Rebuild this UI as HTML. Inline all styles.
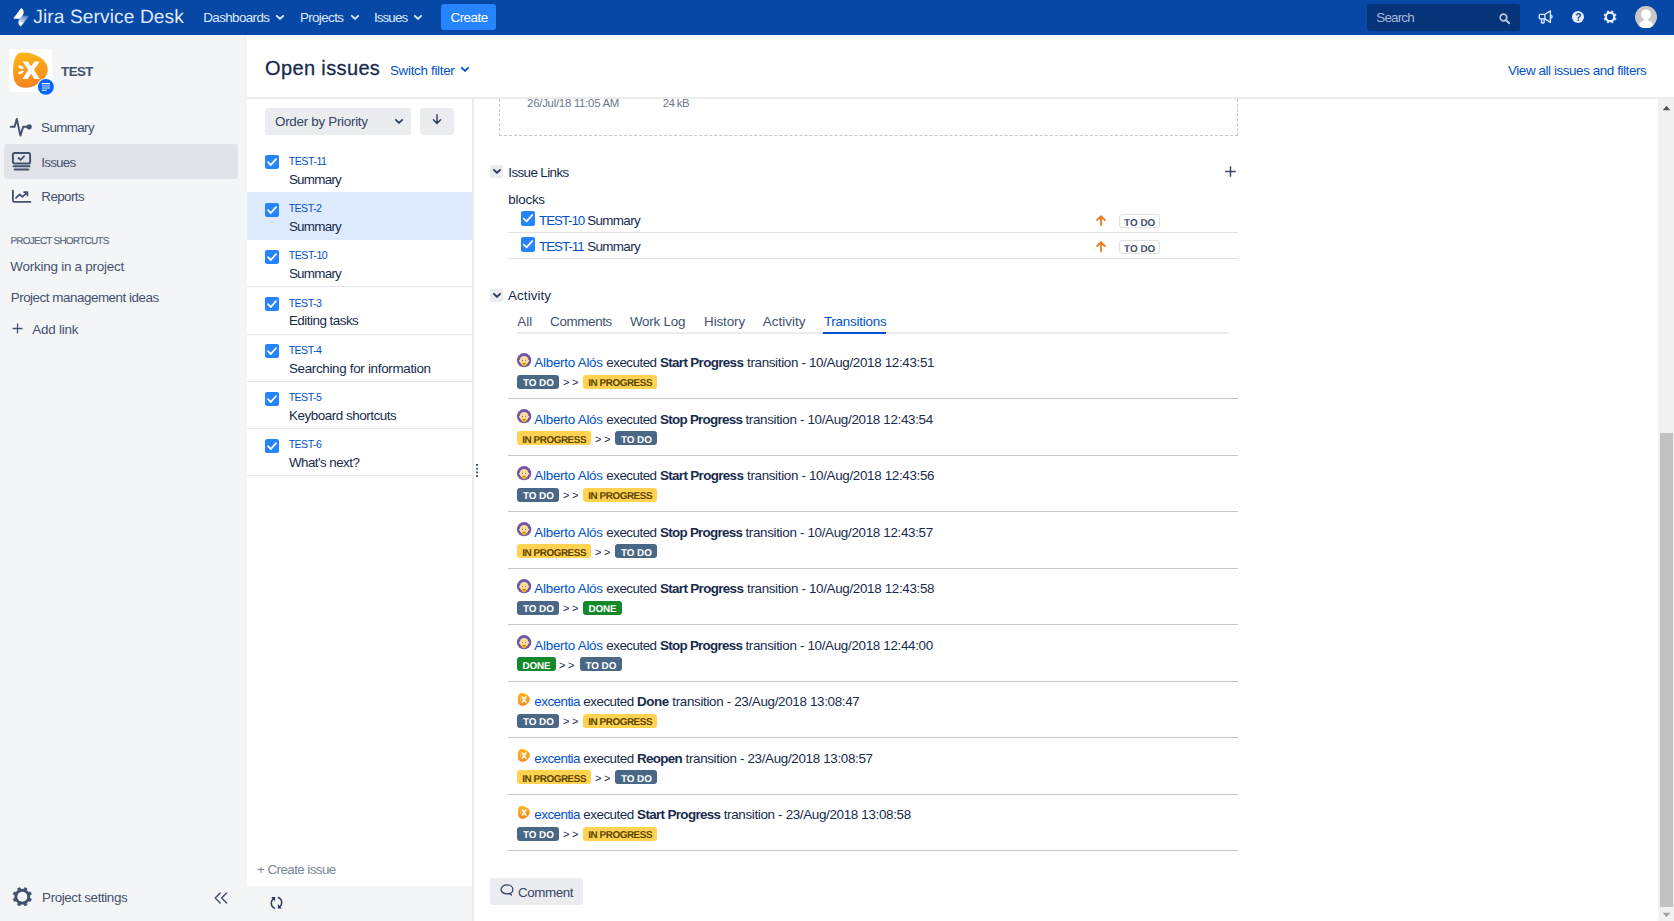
<!DOCTYPE html>
<html lang="en">
<head>
<meta charset="utf-8">
<title>Open issues - TEST - Jira Service Desk</title>
<style>

*{box-sizing:border-box;margin:0;padding:0}
html,body{width:1674px;height:921px;overflow:hidden;background:#fff}
body{font-family:"Liberation Sans",sans-serif;font-size:13px;color:#172B4D;position:relative}
a{text-decoration:none}
.t{position:absolute;white-space:pre;display:block}
.b{position:absolute;display:block}
svg{position:absolute;display:block;overflow:visible}
#hdr{position:absolute;left:0;top:0;width:1674px;height:35px;background:#0747A6}
#side{position:absolute;left:0;top:35px;width:247px;height:886px;background:#F4F5F7}
.cb{position:absolute;width:14px;height:14px;background:#2684FF;border-radius:2px}
.cb svg{left:0;top:0}
.hr{position:absolute;height:1px;background:#DFE1E6}
.hr2{position:absolute;height:1px;background:#C1C7D0}
.hr3{position:absolute;height:1px;background:#E4E6EB}
.btn{position:absolute;background:#EBECF0;border-radius:3px}
.lz{position:absolute;height:14px;border-radius:3px}
.lz-todo{background:#4A6785}
.lz-prog{background:#FFD351}
.lz-done{background:#14892C}
.lzs{position:absolute;height:14px;border-radius:3px;border:1px solid #DFE1E6;background:#fff}

</style>
</head>
<body>

<div id="hdr">
<svg style="left:0;top:0" width="40" height="35" viewBox="0 0 40 35"><defs><linearGradient id="lg1" x1="0.7" y1="0" x2="0.3" y2="1"><stop offset="0" stop-color="#DEEBFF" stop-opacity="0.35"/><stop offset="0.85" stop-color="#fff" stop-opacity="1"/></linearGradient></defs>
<path d="M21.5 8.2 C22.4 8.2 23.9 10.5 23.7 12.7 C23.5 14.9 21.1 17.6 19.3 18.7 L14.5 18.7 C13.8 18.7 13.5 18 14 17.4 L20.8 8.6 C21 8.3 21.2 8.2 21.5 8.2 Z" fill="#fff"/>
<path d="M20.6 26.3 C19.7 26.3 18.2 24 18.4 21.8 C18.6 19.6 21 16.9 22.8 15.8 L27.7 15.8 C28.4 15.8 28.7 16.5 28.2 17.1 L21.3 25.9 C21.1 26.2 20.9 26.3 20.6 26.3 Z" fill="url(#lg1)"/></svg>
<span class="t" style="left:33.3px;top:7px;font-size:19.2px;line-height:21px;letter-spacing:0.08px;color:#DEEBFF;text-rendering:geometricPrecision;">Jira Service Desk</span>

<span class="t" style="left:203.3px;top:10px;font-size:13.4px;line-height:15px;letter-spacing:-0.62px;color:#DEEBFF;">Dashboards</span>
<svg style="left:276px;top:15px" width="8" height="5" viewBox="0 0 8 5"><path d="M0.8 0.8 L4 3.9 L7.2 0.8" fill="none" stroke="#DEEBFF" stroke-width="1.85" stroke-linecap="round" stroke-linejoin="round"/></svg>
<span class="t" style="left:299.9px;top:10px;font-size:13.4px;line-height:15px;letter-spacing:-0.62px;color:#DEEBFF;">Projects</span>
<svg style="left:350.5px;top:15px" width="8" height="5" viewBox="0 0 8 5"><path d="M0.8 0.8 L4 3.9 L7.2 0.8" fill="none" stroke="#DEEBFF" stroke-width="1.85" stroke-linecap="round" stroke-linejoin="round"/></svg>
<span class="t" style="left:373.9px;top:10px;font-size:13.4px;line-height:15px;letter-spacing:-0.88px;color:#DEEBFF;">Issues</span>
<svg style="left:414px;top:15px" width="8" height="5" viewBox="0 0 8 5"><path d="M0.8 0.8 L4 3.9 L7.2 0.8" fill="none" stroke="#DEEBFF" stroke-width="1.85" stroke-linecap="round" stroke-linejoin="round"/></svg>
<span class="b" style="left:441px;top:4px;width:55px;height:26px;background:#2684FF;border-radius:3px"></span>
<span class="t" style="left:450.5px;top:10px;font-size:13.4px;line-height:15px;letter-spacing:-0.52px;color:#fff;">Create</span>

<span class="b" style="left:1367px;top:4px;width:153px;height:27px;background:#073379;border-radius:3px"></span>
<span class="t" style="left:1376.3px;top:10px;font-size:13.4px;line-height:15px;letter-spacing:-0.82px;color:#A5B9DB;">Search</span>

<svg style="left:1498.5px;top:12.8px" width="12" height="12" viewBox="0 0 12 12"><circle cx="4.5" cy="4.5" r="3.3" fill="none" stroke="#B7C4DE" stroke-width="1.7"/><path d="M7.2 7.2 L10.2 10.2" stroke="#B7C4DE" stroke-width="2" stroke-linecap="round"/></svg>
<svg style="left:1535px;top:8px" width="20" height="18" viewBox="1535 8 20 18"><g fill="none" stroke="#DEEBFF" stroke-width="1.35" stroke-linejoin="round" stroke-linecap="round"><rect x="1539.3" y="14.3" width="5.6" height="4.6" rx="0.9"/><path d="M1544.9 14.3 L1550.4 10.9 V22.4 L1544.9 18.9"/><path d="M1541.5 18.9 V22.2 C1541.5 23.3 1544.1 23.3 1544.1 22.2 V18.9"/><path d="M1550.6 15.3 C1552.6 15.3 1552.6 18 1550.6 18"/></g></svg>
<span class="b" style="left:1571.5px;top:10.7px;width:12.6px;height:12.6px;border-radius:50%;background:#E4EEFF"></span>
<span class="t" style="left:1575.3px;top:12px;font-size:10px;line-height:11px;letter-spacing:-1.11px;color:#0747A6;font-weight:700;">?</span>

<svg style="left:1602px;top:9px" width="16" height="16" viewBox="1602 9 16 16"><circle cx="1610.05" cy="16.95" r="5.0" fill="#E4EEFF"/><path d="M1610.98 12.04 L1611.62 10.85 L1613.25 11.52 L1612.87 12.82 L1614.18 14.13 L1615.48 13.75 L1616.15 15.38 L1614.96 16.02 L1614.96 17.88 L1616.15 18.52 L1615.48 20.15 L1614.18 19.77 L1612.87 21.08 L1613.25 22.38 L1611.62 23.05 L1610.98 21.86 L1609.12 21.86 L1608.48 23.05 L1606.85 22.38 L1607.23 21.08 L1605.92 19.77 L1604.62 20.15 L1603.95 18.52 L1605.14 17.88 L1605.14 16.02 L1603.95 15.38 L1604.62 13.75 L1605.92 14.13 L1607.23 12.82 L1606.85 11.52 L1608.48 10.85 L1609.12 12.04 Z" fill="#E4EEFF" stroke="#E4EEFF" stroke-width="0.5" stroke-linejoin="round"/><circle cx="1610.05" cy="16.95" r="3.1" fill="#0747A6"/></svg>
<svg style="left:1635px;top:6px" width="22" height="22" viewBox="0 0 22 22"><defs><clipPath id="avc"><circle cx="11" cy="11.1" r="11"/></clipPath></defs><circle cx="11" cy="11.1" r="11" fill="#C8C8C8"/><g clip-path="url(#avc)" fill="#fff"><circle cx="11" cy="8.4" r="5"/><path d="M2.8 24 C2.8 18 5.4 15.6 8.6 14.4 L9 12 H13 L13.4 14.4 C16.6 15.6 19.2 18 19.2 24 Z"/></g></svg>
</div>

<div id="side"></div>
<span class="b" style="left:9px;top:49px;width:43px;height:43px;background:#fff;border-radius:3px"></span>
<svg style="left:8px;top:48px" width="48" height="48" viewBox="8 48 48 48"><defs><linearGradient id="og" x1="0.4" y1="0" x2="0.5" y2="1"><stop offset="0" stop-color="#FDB515"/><stop offset="1" stop-color="#F5821F"/></linearGradient></defs>
<path d="M22 52.6 C30 52.2 40 55.5 45 62 C48.6 66.6 48.6 72 45.5 76.5 C41 83 33 88 25 87.8 C19 87.6 14.6 84 13.7 78 C12.9 72 13.1 64 14.6 59 C15.9 54.8 18.5 52.8 22 52.6 Z" fill="url(#og)"/>
<path d="M22.6 61.4 H27.8 L31.1 66.4 L34.4 61.4 H39.6 L34 70.1 L39.9 79 H34.6 L31.1 73.8 L27.6 79 H22.3 L28.2 70.1 Z" fill="#fff"/>
<path d="M18 65.8 C20.6 64.8 23.2 66.2 23.8 68.6 C21.2 69.6 18.6 68.2 18 65.8 Z M18 73.8 C18.6 71.4 21.2 70 23.8 71 C23.2 73.4 20.6 74.8 18 73.8 Z" fill="#fff"/>
<circle cx="45.9" cy="86.9" r="8.9" fill="#F4F5F7"/><circle cx="45.9" cy="86.9" r="7.9" fill="#0065FF"/>
<path d="M41.9 83.6 H50.1 M41.9 90.3 H46.8" stroke="#fff" stroke-width="1.1"/><path d="M41.9 85.8 H50.1 M41.9 88 H50.1" stroke="#9CC3FF" stroke-width="1.3"/></svg>
<span class="t" style="left:61.1px;top:64px;font-size:13.4px;line-height:15px;letter-spacing:-0.61px;color:#42526E;font-weight:700;">TEST</span>

<svg style="left:10px;top:117px" width="23" height="21" viewBox="0 0 23 21"><path d="M0.8 9.8 H4.6 L6.8 2 L10.4 18.6 L13.2 9.8 H17.4" fill="none" stroke="#42526E" stroke-width="1.95" stroke-linejoin="round" stroke-linecap="round"/><circle cx="19.2" cy="9.8" r="2.6" fill="#42526E"/></svg>
<span class="t" style="left:41.1px;top:120px;font-size:13.4px;line-height:15px;letter-spacing:-0.63px;color:#42526E;">Summary</span>

<span class="b" style="left:4px;top:144px;width:234px;height:35px;background:#E1E3E9;border-radius:3px"></span>
<svg style="left:12px;top:152px" width="19" height="19" viewBox="0 0 19 19"><rect x="0.9" y="0.9" width="17.2" height="10.6" rx="1.6" fill="none" stroke="#42526E" stroke-width="1.95"/><path d="M6.6 6 L8.6 7.9 L12 4.3" fill="none" stroke="#42526E" stroke-width="1.85" stroke-linecap="round" stroke-linejoin="round"/><path d="M1.6 14.2 H17.4 M2.6 17.4 H16.4" stroke="#42526E" stroke-width="1.95" stroke-linecap="round"/></svg>
<span class="t" style="left:41.3px;top:155px;font-size:13.4px;line-height:15px;letter-spacing:-0.78px;color:#42526E;">Issues</span>

<svg style="left:12px;top:190px" width="19" height="13" viewBox="0 0 19 13"><path d="M0.9 0.6 V10.4 C0.9 11.3 1.5 11.9 2.4 11.9 H18.4" fill="none" stroke="#42526E" stroke-width="1.85" stroke-linecap="round"/><path d="M4 7.8 L7.6 4.4 L10.4 6.8 L15 2.6 M12.2 2.2 H15.4 V5.4" fill="none" stroke="#42526E" stroke-width="1.75" stroke-linecap="round" stroke-linejoin="round"/></svg>
<span class="t" style="left:41.3px;top:189px;font-size:13.4px;line-height:15px;letter-spacing:-0.58px;color:#42526E;">Reports</span>

<span class="t" style="left:10.4px;top:236px;font-size:10px;line-height:11px;letter-spacing:-0.77px;color:#5E6C84;text-rendering:geometricPrecision;-webkit-text-stroke:0.2px #5E6C84;">PROJECT SHORTCUTS</span>

<span class="t" style="left:10.3px;top:259px;font-size:13.4px;line-height:15px;letter-spacing:-0.22px;color:#42526E;">Working in a project</span>

<span class="t" style="left:10.7px;top:290px;font-size:13.4px;line-height:15px;letter-spacing:-0.47px;color:#42526E;">Project management ideas</span>

<svg style="left:11.5px;top:323px" width="11" height="11" viewBox="0 0 11 11"><path d="M5.5 0.5 V10.5 M0.5 5.5 H10.5" stroke="#42526E" stroke-width="1.3"/></svg>
<span class="t" style="left:32.3px;top:322px;font-size:13.4px;line-height:15px;letter-spacing:-0.21px;color:#42526E;">Add link</span>

<svg style="left:12px;top:886px" width="21" height="21" viewBox="12 886 21 21"><circle cx="22.3" cy="896.7" r="7.6" fill="#42526E"/><path d="M23.71 889.23 L24.67 887.50 L27.13 888.52 L26.58 890.42 L28.58 892.42 L30.48 891.87 L31.50 894.33 L29.77 895.29 L29.77 898.11 L31.50 899.07 L30.48 901.53 L28.58 900.98 L26.58 902.98 L27.13 904.88 L24.67 905.90 L23.71 904.17 L20.89 904.17 L19.93 905.90 L17.47 904.88 L18.02 902.98 L16.02 900.98 L14.12 901.53 L13.10 899.07 L14.83 898.11 L14.83 895.29 L13.10 894.33 L14.12 891.87 L16.02 892.42 L18.02 890.42 L17.47 888.52 L19.93 887.50 L20.89 889.23 Z" fill="#42526E" stroke="#42526E" stroke-width="0.5" stroke-linejoin="round"/><circle cx="22.3" cy="896.7" r="5.0" fill="#F4F5F7"/></svg>
<span class="t" style="left:42.1px;top:890px;font-size:13.4px;line-height:15px;letter-spacing:-0.40px;color:#42526E;">Project settings</span>

<svg style="left:214px;top:892px" width="14" height="12" viewBox="0 0 14 12"><path d="M6.2 1 L1.2 6 L6.2 11 M12.6 1 L7.6 6 L12.6 11" fill="none" stroke="#42526E" stroke-width="1.5" stroke-linecap="round" stroke-linejoin="round"/></svg>

<span class="b" style="left:247px;top:97px;width:1427px;height:2px;background:#EBECF0"></span>
<span class="b" style="left:472px;top:99px;width:2px;height:822px;background:#EBECF0"></span>
<span class="b" style="left:247px;top:886px;width:225px;height:35px;background:#F4F5F7"></span>
<span class="t" style="left:265.0px;top:57px;font-size:20px;line-height:22px;letter-spacing:0.37px;color:#172B4D;-webkit-text-stroke:0.3px #172B4D;">Open issues</span>

<a class="t" style="left:390.0px;top:63px;font-size:13.4px;line-height:15px;letter-spacing:-0.31px;color:#0052CC;">Switch filter</a>
<svg style="left:461px;top:67px" width="8" height="5" viewBox="0 0 8 5"><path d="M0.8 0.8 L4 3.9 L7.2 0.8" fill="none" stroke="#0052CC" stroke-width="1.85" stroke-linecap="round" stroke-linejoin="round"/></svg>
<a class="t" style="left:1508.0px;top:63px;font-size:13.4px;line-height:15px;letter-spacing:-0.41px;color:#0052CC;">View all issues and filters</a>

<span class="btn" style="left:265px;top:108px;width:146px;height:27px"></span>
<span class="t" style="left:275.0px;top:114px;font-size:13.4px;line-height:15px;letter-spacing:-0.28px;color:#344563;">Order by Priority</span>
<svg style="left:395px;top:119px" width="8" height="5" viewBox="0 0 8 5"><path d="M0.8 0.8 L4 3.9 L7.2 0.8" fill="none" stroke="#344563" stroke-width="1.85" stroke-linecap="round" stroke-linejoin="round"/></svg>
<span class="btn" style="left:420px;top:108px;width:34px;height:27px"></span>
<svg style="left:432px;top:114px" width="10" height="11" viewBox="0 0 10 11"><path d="M5 0.8 V9.2 M1.4 5.8 L5 9.4 L8.6 5.8" fill="none" stroke="#344563" stroke-width="1.5" stroke-linecap="round" stroke-linejoin="round"/></svg>
<span class="hr3" style="left:247px;top:192px;width:225px"></span><span class="cb" style="left:265px;top:155px"><svg width="14" height="14" viewBox="0 0 14 14"><path d="M3 7.2 L5.8 10 L11 4.2" fill="none" stroke="#fff" stroke-width="1.8" stroke-linecap="round" stroke-linejoin="round"/></svg></span><a class="t" style="left:288.7px;top:155px;font-size:10.6px;line-height:12px;letter-spacing:-0.45px;color:#0052CC;">TEST-11</a>
<span class="t" style="left:288.9px;top:172px;font-size:13.4px;line-height:15px;letter-spacing:-0.73px;color:#172B4D;">Summary</span>

<span class="b" style="left:247px;top:192px;width:225px;height:48px;background:#DEEBFF"></span><span class="cb" style="left:265px;top:203px"><svg width="14" height="14" viewBox="0 0 14 14"><path d="M3 7.2 L5.8 10 L11 4.2" fill="none" stroke="#fff" stroke-width="1.8" stroke-linecap="round" stroke-linejoin="round"/></svg></span><a class="t" style="left:288.7px;top:202px;font-size:10.6px;line-height:12px;letter-spacing:-0.55px;color:#0052CC;">TEST-2</a>
<span class="t" style="left:288.9px;top:219px;font-size:13.4px;line-height:15px;letter-spacing:-0.73px;color:#172B4D;">Summary</span>

<span class="hr3" style="left:247px;top:286px;width:225px"></span><span class="cb" style="left:265px;top:250px"><svg width="14" height="14" viewBox="0 0 14 14"><path d="M3 7.2 L5.8 10 L11 4.2" fill="none" stroke="#fff" stroke-width="1.8" stroke-linecap="round" stroke-linejoin="round"/></svg></span><a class="t" style="left:288.7px;top:249px;font-size:10.6px;line-height:12px;letter-spacing:-0.46px;color:#0052CC;">TEST-10</a>
<span class="t" style="left:288.9px;top:266px;font-size:13.4px;line-height:15px;letter-spacing:-0.73px;color:#172B4D;">Summary</span>

<span class="hr3" style="left:247px;top:334px;width:225px"></span><span class="cb" style="left:265px;top:297px"><svg width="14" height="14" viewBox="0 0 14 14"><path d="M3 7.2 L5.8 10 L11 4.2" fill="none" stroke="#fff" stroke-width="1.8" stroke-linecap="round" stroke-linejoin="round"/></svg></span><a class="t" style="left:288.7px;top:297px;font-size:10.6px;line-height:12px;letter-spacing:-0.55px;color:#0052CC;">TEST-3</a>
<span class="t" style="left:288.9px;top:313px;font-size:13.4px;line-height:15px;letter-spacing:-0.50px;color:#172B4D;">Editing tasks</span>

<span class="hr3" style="left:247px;top:381px;width:225px"></span><span class="cb" style="left:265px;top:344px"><svg width="14" height="14" viewBox="0 0 14 14"><path d="M3 7.2 L5.8 10 L11 4.2" fill="none" stroke="#fff" stroke-width="1.8" stroke-linecap="round" stroke-linejoin="round"/></svg></span><a class="t" style="left:288.7px;top:344px;font-size:10.6px;line-height:12px;letter-spacing:-0.55px;color:#0052CC;">TEST-4</a>
<span class="t" style="left:288.9px;top:361px;font-size:13.4px;line-height:15px;letter-spacing:-0.31px;color:#172B4D;">Searching for information</span>

<span class="hr3" style="left:247px;top:428px;width:225px"></span><span class="cb" style="left:265px;top:392px"><svg width="14" height="14" viewBox="0 0 14 14"><path d="M3 7.2 L5.8 10 L11 4.2" fill="none" stroke="#fff" stroke-width="1.8" stroke-linecap="round" stroke-linejoin="round"/></svg></span><a class="t" style="left:288.7px;top:391px;font-size:10.6px;line-height:12px;letter-spacing:-0.55px;color:#0052CC;">TEST-5</a>
<span class="t" style="left:288.9px;top:408px;font-size:13.4px;line-height:15px;letter-spacing:-0.44px;color:#172B4D;">Keyboard shortcuts</span>

<span class="hr3" style="left:247px;top:475px;width:225px"></span><span class="cb" style="left:265px;top:439px"><svg width="14" height="14" viewBox="0 0 14 14"><path d="M3 7.2 L5.8 10 L11 4.2" fill="none" stroke="#fff" stroke-width="1.8" stroke-linecap="round" stroke-linejoin="round"/></svg></span><a class="t" style="left:288.7px;top:438px;font-size:10.6px;line-height:12px;letter-spacing:-0.55px;color:#0052CC;">TEST-6</a>
<span class="t" style="left:288.9px;top:455px;font-size:13.4px;line-height:15px;letter-spacing:-0.55px;color:#172B4D;">What&#x27;s next?</span>

<svg style="left:476px;top:464px" width="2" height="13" viewBox="0 0 2 13"><g fill="#42526E"><rect x="0" y="0" width="2" height="1.9"/><rect x="0" y="3.8" width="2" height="1.7"/><rect x="0" y="7.5" width="2" height="1.7"/><rect x="0" y="11.2" width="2" height="1.8"/></g></svg>
<span class="t" style="left:257.0px;top:862px;font-size:13.4px;line-height:15px;letter-spacing:-0.57px;color:#7A869A;">+ Create issue</span>

<svg style="left:268px;top:894px" width="17" height="17" viewBox="268 894 17 17"><g fill="none" stroke="#253858" stroke-width="1.5" stroke-linecap="round"><path d="M274.6 908.1 C272.4 907.3 271.3 905.2 271.3 903 C271.3 901.2 272 899.8 273.2 898.8"/><path d="M278.4 897.5 C280.6 898.3 281.7 900.4 281.7 902.6 C281.7 904.4 281 905.8 279.8 906.8"/></g><path d="M271.2 897.1 H275.1 V901.6 Z M281.8 908.6 H277.9 V904.1 Z" fill="#253858"/></svg>

<span class="b" style="left:499px;top:99px;width:739px;height:37px;border:1px dashed #C1C7D0;border-top:none"></span>
<span class="t" style="left:527.1px;top:97px;font-size:11.4px;line-height:12px;letter-spacing:-0.26px;color:#6B778C;">26/Jul/18 11:05 AM</span>

<span class="t" style="left:662.7px;top:97px;font-size:11.4px;line-height:12px;letter-spacing:-0.55px;color:#6B778C;">24 kB</span>

<span class="b" style="left:490px;top:165px;width:13px;height:13px;background:#EBECF0;border-radius:2px"></span><svg style="left:493px;top:169px" width="8" height="5" viewBox="0 0 8 5"><path d="M0.9 0.9 L4 3.9 L7.1 0.9" fill="none" stroke="#253858" stroke-width="1.9" stroke-linecap="round" stroke-linejoin="round"/></svg>
<span class="t" style="left:508.3px;top:165px;font-size:13.4px;line-height:15px;letter-spacing:-0.61px;color:#172B4D;">Issue Links</span>

<svg style="left:1225.2px;top:165.6px" width="11" height="11" viewBox="0 0 11 11"><path d="M5.5 0.3 V10.7 M0.3 5.5 H10.7" stroke="#344563" stroke-width="1.4"/></svg>
<span class="t" style="left:508.3px;top:192px;font-size:13.4px;line-height:15px;letter-spacing:-0.24px;color:#172B4D;">blocks</span>

<span class="b" style="left:521px;top:211px;width:14px;height:14.5px;background:#2684FF;border-radius:2px"></span><svg style="left:521px;top:211px" width="14" height="15" viewBox="0 0 14 15"><path d="M2.8 7.6 L5.6 10.4 L11.2 4.2" fill="none" stroke="#fff" stroke-width="1.8" stroke-linecap="round" stroke-linejoin="round"/></svg><a class="t" style="left:539.1px;top:213px;font-size:13.4px;line-height:15px;letter-spacing:-1.12px;color:#0052CC;">TEST-10</a>
<span class="t" style="left:587.3px;top:213px;font-size:13.4px;line-height:15px;letter-spacing:-0.66px;color:#172B4D;">Summary</span>
<svg style="left:1096px;top:215.2px" width="10" height="11" viewBox="0 0 10 11"><path d="M5 10.2 V1.4 M1.2 5 L5 1.2 L8.8 5" fill="none" stroke="#EA7D24" stroke-width="1.85" stroke-linecap="round" stroke-linejoin="round"/></svg><span class="lzs" style="left:1119px;top:214px;width:41px"></span><span class="t" style="left:1124.0px;top:218px;font-size:9.9px;line-height:11px;letter-spacing:0.04px;color:#42526E;font-weight:700;text-rendering:geometricPrecision;">TO DO</span>
<span class="hr" style="left:508px;top:232px;width:730px"></span>
<span class="b" style="left:521px;top:237px;width:14px;height:14.5px;background:#2684FF;border-radius:2px"></span><svg style="left:521px;top:237px" width="14" height="15" viewBox="0 0 14 15"><path d="M2.8 7.6 L5.6 10.4 L11.2 4.2" fill="none" stroke="#fff" stroke-width="1.8" stroke-linecap="round" stroke-linejoin="round"/></svg><a class="t" style="left:539.1px;top:239px;font-size:13.4px;line-height:15px;letter-spacing:-1.05px;color:#0052CC;">TEST-11</a>
<span class="t" style="left:587.3px;top:239px;font-size:13.4px;line-height:15px;letter-spacing:-0.66px;color:#172B4D;">Summary</span>
<svg style="left:1096px;top:241.2px" width="10" height="11" viewBox="0 0 10 11"><path d="M5 10.2 V1.4 M1.2 5 L5 1.2 L8.8 5" fill="none" stroke="#EA7D24" stroke-width="1.85" stroke-linecap="round" stroke-linejoin="round"/></svg><span class="lzs" style="left:1119px;top:240px;width:41px"></span><span class="t" style="left:1124.0px;top:244px;font-size:9.9px;line-height:11px;letter-spacing:0.04px;color:#42526E;font-weight:700;text-rendering:geometricPrecision;">TO DO</span>
<span class="hr" style="left:508px;top:258px;width:730px"></span>
<span class="b" style="left:490px;top:289px;width:13px;height:13px;background:#EBECF0;border-radius:2px"></span><svg style="left:493px;top:293px" width="8" height="5" viewBox="0 0 8 5"><path d="M0.9 0.9 L4 3.9 L7.1 0.9" fill="none" stroke="#253858" stroke-width="1.9" stroke-linecap="round" stroke-linejoin="round"/></svg>
<span class="t" style="left:508.1px;top:288px;font-size:13.4px;line-height:15px;letter-spacing:0.07px;color:#172B4D;">Activity</span>

<span class="b" style="left:517px;top:332px;width:712px;height:2px;background:#EBECF0"></span>
<span class="b" style="left:823px;top:332px;width:63px;height:2px;background:#0052CC"></span>
<span class="t" style="left:517.3px;top:314px;font-size:13.4px;line-height:15px;letter-spacing:0.04px;color:#42526E;">All</span>

<span class="t" style="left:550.1px;top:314px;font-size:13.4px;line-height:15px;letter-spacing:-0.36px;color:#42526E;">Comments</span>

<span class="t" style="left:629.9px;top:314px;font-size:13.4px;line-height:15px;letter-spacing:-0.21px;color:#42526E;">Work Log</span>

<span class="t" style="left:704.1px;top:314px;font-size:13.4px;line-height:15px;letter-spacing:-0.11px;color:#42526E;">History</span>

<span class="t" style="left:762.7px;top:314px;font-size:13.4px;line-height:15px;letter-spacing:0.06px;color:#42526E;">Activity</span>

<a class="t" style="left:823.9px;top:314px;font-size:13.4px;line-height:15px;letter-spacing:-0.22px;color:#0052CC;">Transitions</a>

<svg style="left:516.9px;top:353.0px" width="15" height="15" viewBox="0 0 15 15"><circle cx="7.1" cy="7.2" r="7.15" fill="#7257A8"/><ellipse cx="7.1" cy="7.5" rx="4.3" ry="4.5" fill="#FFE2A3"/><circle cx="2.9" cy="7.7" r="0.9" fill="#FFE2A3"/><circle cx="11.3" cy="7.7" r="0.9" fill="#FFE2A3"/><rect x="4.8" y="5.3" width="1.3" height="0.7" fill="#FFC940"/><rect x="8.1" y="5.3" width="1.3" height="0.7" fill="#FFC940"/><circle cx="5.5" cy="7.5" r="0.65" fill="#6B7A8C"/><circle cx="8.6" cy="7.5" r="0.65" fill="#6B7A8C"/><path d="M4.9 9.7 Q7.1 8.9 9.3 9.7 V11 Q9.3 13.3 7.1 13.3 Q4.9 13.3 4.9 11 Z" fill="#FFB81A"/><ellipse cx="7.1" cy="10.7" rx="1" ry="0.55" fill="#5A5A4A"/></svg><a class="t" style="left:534.3px;top:355px;font-size:13.4px;line-height:15px;letter-spacing:-0.25px;color:#0052CC;">Alberto Alós</a>
<span class="t" style="left:606.3px;top:355px;font-size:13.4px;line-height:15px;letter-spacing:-0.52px;color:#172B4D;">executed</span>
<span class="t" style="left:659.9px;top:355px;font-size:13.4px;line-height:15px;letter-spacing:-0.64px;color:#172B4D;font-weight:700;">Start Progress</span>
<span class="t" style="left:747.0px;top:355px;font-size:13.4px;line-height:15px;letter-spacing:-0.33px;color:#172B4D;">transition - 10/Aug/2018 12:43:51</span>
<span class="lz lz-todo" style="left:517px;top:375px;width:42px"></span><span class="t" style="left:522.9px;top:378px;font-size:9.9px;line-height:11px;letter-spacing:-0.04px;color:#fff;font-weight:700;text-rendering:geometricPrecision;">TO DO</span>
<span class="t" style="left:563.1px;top:376px;font-size:11px;line-height:12px;letter-spacing:-0.04px;color:#172B4D;">&gt;</span>
<span class="t" style="left:572.1px;top:376px;font-size:11px;line-height:12px;letter-spacing:-0.04px;color:#172B4D;">&gt;</span>
<span class="lz lz-prog" style="left:583px;top:375px;width:74px"></span><span class="t" style="left:588.3px;top:378px;font-size:9.9px;line-height:11px;letter-spacing:-0.44px;color:#594300;font-weight:700;text-rendering:geometricPrecision;">IN PROGRESS</span>
<span class="hr2" style="left:508px;top:398px;width:730px"></span>
<svg style="left:516.9px;top:409.4px" width="15" height="15" viewBox="0 0 15 15"><circle cx="7.1" cy="7.2" r="7.15" fill="#7257A8"/><ellipse cx="7.1" cy="7.5" rx="4.3" ry="4.5" fill="#FFE2A3"/><circle cx="2.9" cy="7.7" r="0.9" fill="#FFE2A3"/><circle cx="11.3" cy="7.7" r="0.9" fill="#FFE2A3"/><rect x="4.8" y="5.3" width="1.3" height="0.7" fill="#FFC940"/><rect x="8.1" y="5.3" width="1.3" height="0.7" fill="#FFC940"/><circle cx="5.5" cy="7.5" r="0.65" fill="#6B7A8C"/><circle cx="8.6" cy="7.5" r="0.65" fill="#6B7A8C"/><path d="M4.9 9.7 Q7.1 8.9 9.3 9.7 V11 Q9.3 13.3 7.1 13.3 Q4.9 13.3 4.9 11 Z" fill="#FFB81A"/><ellipse cx="7.1" cy="10.7" rx="1" ry="0.55" fill="#5A5A4A"/></svg><a class="t" style="left:534.3px;top:412px;font-size:13.4px;line-height:15px;letter-spacing:-0.25px;color:#0052CC;">Alberto Alós</a>
<span class="t" style="left:606.3px;top:412px;font-size:13.4px;line-height:15px;letter-spacing:-0.52px;color:#172B4D;">executed</span>
<span class="t" style="left:660.1px;top:412px;font-size:13.4px;line-height:15px;letter-spacing:-0.73px;color:#172B4D;font-weight:700;">Stop Progress</span>
<span class="t" style="left:745.4px;top:412px;font-size:13.4px;line-height:15px;letter-spacing:-0.32px;color:#172B4D;">transition - 10/Aug/2018 12:43:54</span>
<span class="lz lz-prog" style="left:517px;top:431px;width:74px"></span><span class="t" style="left:522.3px;top:435px;font-size:9.9px;line-height:11px;letter-spacing:-0.44px;color:#594300;font-weight:700;text-rendering:geometricPrecision;">IN PROGRESS</span>
<span class="t" style="left:595.1px;top:433px;font-size:11px;line-height:12px;letter-spacing:-0.04px;color:#172B4D;">&gt;</span>
<span class="t" style="left:604.1px;top:433px;font-size:11px;line-height:12px;letter-spacing:-0.04px;color:#172B4D;">&gt;</span>
<span class="lz lz-todo" style="left:615px;top:431px;width:42px"></span><span class="t" style="left:620.9px;top:435px;font-size:9.9px;line-height:11px;letter-spacing:-0.04px;color:#fff;font-weight:700;text-rendering:geometricPrecision;">TO DO</span>
<span class="hr2" style="left:508px;top:455px;width:730px"></span>
<svg style="left:516.9px;top:465.9px" width="15" height="15" viewBox="0 0 15 15"><circle cx="7.1" cy="7.2" r="7.15" fill="#7257A8"/><ellipse cx="7.1" cy="7.5" rx="4.3" ry="4.5" fill="#FFE2A3"/><circle cx="2.9" cy="7.7" r="0.9" fill="#FFE2A3"/><circle cx="11.3" cy="7.7" r="0.9" fill="#FFE2A3"/><rect x="4.8" y="5.3" width="1.3" height="0.7" fill="#FFC940"/><rect x="8.1" y="5.3" width="1.3" height="0.7" fill="#FFC940"/><circle cx="5.5" cy="7.5" r="0.65" fill="#6B7A8C"/><circle cx="8.6" cy="7.5" r="0.65" fill="#6B7A8C"/><path d="M4.9 9.7 Q7.1 8.9 9.3 9.7 V11 Q9.3 13.3 7.1 13.3 Q4.9 13.3 4.9 11 Z" fill="#FFB81A"/><ellipse cx="7.1" cy="10.7" rx="1" ry="0.55" fill="#5A5A4A"/></svg><a class="t" style="left:534.3px;top:468px;font-size:13.4px;line-height:15px;letter-spacing:-0.25px;color:#0052CC;">Alberto Alós</a>
<span class="t" style="left:606.3px;top:468px;font-size:13.4px;line-height:15px;letter-spacing:-0.52px;color:#172B4D;">executed</span>
<span class="t" style="left:659.9px;top:468px;font-size:13.4px;line-height:15px;letter-spacing:-0.64px;color:#172B4D;font-weight:700;">Start Progress</span>
<span class="t" style="left:747.0px;top:468px;font-size:13.4px;line-height:15px;letter-spacing:-0.33px;color:#172B4D;">transition - 10/Aug/2018 12:43:56</span>
<span class="lz lz-todo" style="left:517px;top:488px;width:42px"></span><span class="t" style="left:522.9px;top:491px;font-size:9.9px;line-height:11px;letter-spacing:-0.04px;color:#fff;font-weight:700;text-rendering:geometricPrecision;">TO DO</span>
<span class="t" style="left:563.1px;top:489px;font-size:11px;line-height:12px;letter-spacing:-0.04px;color:#172B4D;">&gt;</span>
<span class="t" style="left:572.1px;top:489px;font-size:11px;line-height:12px;letter-spacing:-0.04px;color:#172B4D;">&gt;</span>
<span class="lz lz-prog" style="left:583px;top:488px;width:74px"></span><span class="t" style="left:588.3px;top:491px;font-size:9.9px;line-height:11px;letter-spacing:-0.44px;color:#594300;font-weight:700;text-rendering:geometricPrecision;">IN PROGRESS</span>
<span class="hr2" style="left:508px;top:511px;width:730px"></span>
<svg style="left:516.9px;top:522.4px" width="15" height="15" viewBox="0 0 15 15"><circle cx="7.1" cy="7.2" r="7.15" fill="#7257A8"/><ellipse cx="7.1" cy="7.5" rx="4.3" ry="4.5" fill="#FFE2A3"/><circle cx="2.9" cy="7.7" r="0.9" fill="#FFE2A3"/><circle cx="11.3" cy="7.7" r="0.9" fill="#FFE2A3"/><rect x="4.8" y="5.3" width="1.3" height="0.7" fill="#FFC940"/><rect x="8.1" y="5.3" width="1.3" height="0.7" fill="#FFC940"/><circle cx="5.5" cy="7.5" r="0.65" fill="#6B7A8C"/><circle cx="8.6" cy="7.5" r="0.65" fill="#6B7A8C"/><path d="M4.9 9.7 Q7.1 8.9 9.3 9.7 V11 Q9.3 13.3 7.1 13.3 Q4.9 13.3 4.9 11 Z" fill="#FFB81A"/><ellipse cx="7.1" cy="10.7" rx="1" ry="0.55" fill="#5A5A4A"/></svg><a class="t" style="left:534.3px;top:525px;font-size:13.4px;line-height:15px;letter-spacing:-0.25px;color:#0052CC;">Alberto Alós</a>
<span class="t" style="left:606.3px;top:525px;font-size:13.4px;line-height:15px;letter-spacing:-0.52px;color:#172B4D;">executed</span>
<span class="t" style="left:660.1px;top:525px;font-size:13.4px;line-height:15px;letter-spacing:-0.73px;color:#172B4D;font-weight:700;">Stop Progress</span>
<span class="t" style="left:745.4px;top:525px;font-size:13.4px;line-height:15px;letter-spacing:-0.32px;color:#172B4D;">transition - 10/Aug/2018 12:43:57</span>
<span class="lz lz-prog" style="left:517px;top:544px;width:74px"></span><span class="t" style="left:522.3px;top:548px;font-size:9.9px;line-height:11px;letter-spacing:-0.44px;color:#594300;font-weight:700;text-rendering:geometricPrecision;">IN PROGRESS</span>
<span class="t" style="left:595.1px;top:546px;font-size:11px;line-height:12px;letter-spacing:-0.04px;color:#172B4D;">&gt;</span>
<span class="t" style="left:604.1px;top:546px;font-size:11px;line-height:12px;letter-spacing:-0.04px;color:#172B4D;">&gt;</span>
<span class="lz lz-todo" style="left:615px;top:544px;width:42px"></span><span class="t" style="left:620.9px;top:548px;font-size:9.9px;line-height:11px;letter-spacing:-0.04px;color:#fff;font-weight:700;text-rendering:geometricPrecision;">TO DO</span>
<span class="hr2" style="left:508px;top:568px;width:730px"></span>
<svg style="left:516.9px;top:578.8px" width="15" height="15" viewBox="0 0 15 15"><circle cx="7.1" cy="7.2" r="7.15" fill="#7257A8"/><ellipse cx="7.1" cy="7.5" rx="4.3" ry="4.5" fill="#FFE2A3"/><circle cx="2.9" cy="7.7" r="0.9" fill="#FFE2A3"/><circle cx="11.3" cy="7.7" r="0.9" fill="#FFE2A3"/><rect x="4.8" y="5.3" width="1.3" height="0.7" fill="#FFC940"/><rect x="8.1" y="5.3" width="1.3" height="0.7" fill="#FFC940"/><circle cx="5.5" cy="7.5" r="0.65" fill="#6B7A8C"/><circle cx="8.6" cy="7.5" r="0.65" fill="#6B7A8C"/><path d="M4.9 9.7 Q7.1 8.9 9.3 9.7 V11 Q9.3 13.3 7.1 13.3 Q4.9 13.3 4.9 11 Z" fill="#FFB81A"/><ellipse cx="7.1" cy="10.7" rx="1" ry="0.55" fill="#5A5A4A"/></svg><a class="t" style="left:534.3px;top:581px;font-size:13.4px;line-height:15px;letter-spacing:-0.25px;color:#0052CC;">Alberto Alós</a>
<span class="t" style="left:606.3px;top:581px;font-size:13.4px;line-height:15px;letter-spacing:-0.52px;color:#172B4D;">executed</span>
<span class="t" style="left:659.9px;top:581px;font-size:13.4px;line-height:15px;letter-spacing:-0.64px;color:#172B4D;font-weight:700;">Start Progress</span>
<span class="t" style="left:747.0px;top:581px;font-size:13.4px;line-height:15px;letter-spacing:-0.33px;color:#172B4D;">transition - 10/Aug/2018 12:43:58</span>
<span class="lz lz-todo" style="left:517px;top:601px;width:42px"></span><span class="t" style="left:522.9px;top:604px;font-size:9.9px;line-height:11px;letter-spacing:-0.04px;color:#fff;font-weight:700;text-rendering:geometricPrecision;">TO DO</span>
<span class="t" style="left:563.1px;top:602px;font-size:11px;line-height:12px;letter-spacing:-0.04px;color:#172B4D;">&gt;</span>
<span class="t" style="left:572.1px;top:602px;font-size:11px;line-height:12px;letter-spacing:-0.04px;color:#172B4D;">&gt;</span>
<span class="lz lz-done" style="left:583px;top:601px;width:38.6px"></span><span class="t" style="left:588.5px;top:604px;font-size:9.9px;line-height:11px;letter-spacing:-0.18px;color:#fff;font-weight:700;text-rendering:geometricPrecision;">DONE</span>
<span class="hr2" style="left:508px;top:624px;width:730px"></span>
<svg style="left:516.9px;top:635.2px" width="15" height="15" viewBox="0 0 15 15"><circle cx="7.1" cy="7.2" r="7.15" fill="#7257A8"/><ellipse cx="7.1" cy="7.5" rx="4.3" ry="4.5" fill="#FFE2A3"/><circle cx="2.9" cy="7.7" r="0.9" fill="#FFE2A3"/><circle cx="11.3" cy="7.7" r="0.9" fill="#FFE2A3"/><rect x="4.8" y="5.3" width="1.3" height="0.7" fill="#FFC940"/><rect x="8.1" y="5.3" width="1.3" height="0.7" fill="#FFC940"/><circle cx="5.5" cy="7.5" r="0.65" fill="#6B7A8C"/><circle cx="8.6" cy="7.5" r="0.65" fill="#6B7A8C"/><path d="M4.9 9.7 Q7.1 8.9 9.3 9.7 V11 Q9.3 13.3 7.1 13.3 Q4.9 13.3 4.9 11 Z" fill="#FFB81A"/><ellipse cx="7.1" cy="10.7" rx="1" ry="0.55" fill="#5A5A4A"/></svg><a class="t" style="left:534.3px;top:638px;font-size:13.4px;line-height:15px;letter-spacing:-0.25px;color:#0052CC;">Alberto Alós</a>
<span class="t" style="left:606.3px;top:638px;font-size:13.4px;line-height:15px;letter-spacing:-0.52px;color:#172B4D;">executed</span>
<span class="t" style="left:660.1px;top:638px;font-size:13.4px;line-height:15px;letter-spacing:-0.73px;color:#172B4D;font-weight:700;">Stop Progress</span>
<span class="t" style="left:745.4px;top:638px;font-size:13.4px;line-height:15px;letter-spacing:-0.32px;color:#172B4D;">transition - 10/Aug/2018 12:44:00</span>
<span class="lz lz-done" style="left:517px;top:657px;width:38.6px"></span><span class="t" style="left:522.5px;top:661px;font-size:9.9px;line-height:11px;letter-spacing:-0.18px;color:#fff;font-weight:700;text-rendering:geometricPrecision;">DONE</span>
<span class="t" style="left:559.1px;top:659px;font-size:11px;line-height:12px;letter-spacing:-0.04px;color:#172B4D;">&gt;</span>
<span class="t" style="left:568.1px;top:659px;font-size:11px;line-height:12px;letter-spacing:-0.04px;color:#172B4D;">&gt;</span>
<span class="lz lz-todo" style="left:579.5px;top:657px;width:42px"></span><span class="t" style="left:585.4px;top:661px;font-size:9.9px;line-height:11px;letter-spacing:-0.04px;color:#fff;font-weight:700;text-rendering:geometricPrecision;">TO DO</span>
<span class="hr2" style="left:508px;top:681px;width:730px"></span>
<svg style="left:518.1px;top:692.8px" width="11.9" height="12.9" viewBox="13.1 52.5 34.8 35.4" preserveAspectRatio="none"><defs><linearGradient id="og6" x1="0.4" y1="0" x2="0.5" y2="1"><stop offset="0" stop-color="#FDB515"/><stop offset="1" stop-color="#F5821F"/></linearGradient></defs><path d="M22 52.6 C30 52.2 40 55.5 45 62 C48.6 66.6 48.6 72 45.5 76.5 C41 83 33 88 25 87.8 C19 87.6 14.6 84 13.7 78 C12.9 72 13.1 64 14.6 59 C15.9 54.8 18.5 52.8 22 52.6 Z" fill="url(#og6)"/><path d="M22.6 61.4 H27.8 L31.1 66.4 L34.4 61.4 H39.6 L34 70.1 L39.9 79 H34.6 L31.1 73.8 L27.6 79 H22.3 L28.2 70.1 Z" fill="#fff"/><path d="M18 65.8 C20.6 64.8 23.2 66.2 23.8 68.6 C21.2 69.6 18.6 68.2 18 65.8 Z M18 73.8 C18.6 71.4 21.2 70 23.8 71 C23.2 73.4 20.6 74.8 18 73.8 Z" fill="#fff" fill-opacity="0.6"/></svg><a class="t" style="left:534.3px;top:694px;font-size:13.4px;line-height:15px;letter-spacing:-0.53px;color:#0052CC;">excentia</a>
<span class="t" style="left:583.3px;top:694px;font-size:13.4px;line-height:15px;letter-spacing:-0.49px;color:#172B4D;">executed</span>
<span class="t" style="left:637.1px;top:694px;font-size:13.4px;line-height:15px;letter-spacing:-0.45px;color:#172B4D;font-weight:700;">Done</span>
<span class="t" style="left:672.3px;top:694px;font-size:13.4px;line-height:15px;letter-spacing:-0.33px;color:#172B4D;">transition - 23/Aug/2018 13:08:47</span>
<span class="lz lz-todo" style="left:517px;top:714px;width:42px"></span><span class="t" style="left:522.9px;top:717px;font-size:9.9px;line-height:11px;letter-spacing:-0.04px;color:#fff;font-weight:700;text-rendering:geometricPrecision;">TO DO</span>
<span class="t" style="left:563.1px;top:715px;font-size:11px;line-height:12px;letter-spacing:-0.04px;color:#172B4D;">&gt;</span>
<span class="t" style="left:572.1px;top:715px;font-size:11px;line-height:12px;letter-spacing:-0.04px;color:#172B4D;">&gt;</span>
<span class="lz lz-prog" style="left:583px;top:714px;width:74px"></span><span class="t" style="left:588.3px;top:717px;font-size:9.9px;line-height:11px;letter-spacing:-0.44px;color:#594300;font-weight:700;text-rendering:geometricPrecision;">IN PROGRESS</span>
<span class="hr2" style="left:508px;top:737px;width:730px"></span>
<svg style="left:518.1px;top:749.3px" width="11.9" height="12.9" viewBox="13.1 52.5 34.8 35.4" preserveAspectRatio="none"><defs><linearGradient id="og7" x1="0.4" y1="0" x2="0.5" y2="1"><stop offset="0" stop-color="#FDB515"/><stop offset="1" stop-color="#F5821F"/></linearGradient></defs><path d="M22 52.6 C30 52.2 40 55.5 45 62 C48.6 66.6 48.6 72 45.5 76.5 C41 83 33 88 25 87.8 C19 87.6 14.6 84 13.7 78 C12.9 72 13.1 64 14.6 59 C15.9 54.8 18.5 52.8 22 52.6 Z" fill="url(#og7)"/><path d="M22.6 61.4 H27.8 L31.1 66.4 L34.4 61.4 H39.6 L34 70.1 L39.9 79 H34.6 L31.1 73.8 L27.6 79 H22.3 L28.2 70.1 Z" fill="#fff"/><path d="M18 65.8 C20.6 64.8 23.2 66.2 23.8 68.6 C21.2 69.6 18.6 68.2 18 65.8 Z M18 73.8 C18.6 71.4 21.2 70 23.8 71 C23.2 73.4 20.6 74.8 18 73.8 Z" fill="#fff" fill-opacity="0.6"/></svg><a class="t" style="left:534.3px;top:751px;font-size:13.4px;line-height:15px;letter-spacing:-0.53px;color:#0052CC;">excentia</a>
<span class="t" style="left:583.3px;top:751px;font-size:13.4px;line-height:15px;letter-spacing:-0.49px;color:#172B4D;">executed</span>
<span class="t" style="left:637.1px;top:751px;font-size:13.4px;line-height:15px;letter-spacing:-0.70px;color:#172B4D;font-weight:700;">Reopen</span>
<span class="t" style="left:685.5px;top:751px;font-size:13.4px;line-height:15px;letter-spacing:-0.33px;color:#172B4D;">transition - 23/Aug/2018 13:08:57</span>
<span class="lz lz-prog" style="left:517px;top:770px;width:74px"></span><span class="t" style="left:522.3px;top:774px;font-size:9.9px;line-height:11px;letter-spacing:-0.44px;color:#594300;font-weight:700;text-rendering:geometricPrecision;">IN PROGRESS</span>
<span class="t" style="left:595.1px;top:772px;font-size:11px;line-height:12px;letter-spacing:-0.04px;color:#172B4D;">&gt;</span>
<span class="t" style="left:604.1px;top:772px;font-size:11px;line-height:12px;letter-spacing:-0.04px;color:#172B4D;">&gt;</span>
<span class="lz lz-todo" style="left:615px;top:770px;width:42px"></span><span class="t" style="left:620.9px;top:774px;font-size:9.9px;line-height:11px;letter-spacing:-0.04px;color:#fff;font-weight:700;text-rendering:geometricPrecision;">TO DO</span>
<span class="hr2" style="left:508px;top:794px;width:730px"></span>
<svg style="left:518.1px;top:805.8px" width="11.9" height="12.9" viewBox="13.1 52.5 34.8 35.4" preserveAspectRatio="none"><defs><linearGradient id="og8" x1="0.4" y1="0" x2="0.5" y2="1"><stop offset="0" stop-color="#FDB515"/><stop offset="1" stop-color="#F5821F"/></linearGradient></defs><path d="M22 52.6 C30 52.2 40 55.5 45 62 C48.6 66.6 48.6 72 45.5 76.5 C41 83 33 88 25 87.8 C19 87.6 14.6 84 13.7 78 C12.9 72 13.1 64 14.6 59 C15.9 54.8 18.5 52.8 22 52.6 Z" fill="url(#og8)"/><path d="M22.6 61.4 H27.8 L31.1 66.4 L34.4 61.4 H39.6 L34 70.1 L39.9 79 H34.6 L31.1 73.8 L27.6 79 H22.3 L28.2 70.1 Z" fill="#fff"/><path d="M18 65.8 C20.6 64.8 23.2 66.2 23.8 68.6 C21.2 69.6 18.6 68.2 18 65.8 Z M18 73.8 C18.6 71.4 21.2 70 23.8 71 C23.2 73.4 20.6 74.8 18 73.8 Z" fill="#fff" fill-opacity="0.6"/></svg><a class="t" style="left:534.3px;top:807px;font-size:13.4px;line-height:15px;letter-spacing:-0.53px;color:#0052CC;">excentia</a>
<span class="t" style="left:583.3px;top:807px;font-size:13.4px;line-height:15px;letter-spacing:-0.49px;color:#172B4D;">executed</span>
<span class="t" style="left:637.1px;top:807px;font-size:13.4px;line-height:15px;letter-spacing:-0.64px;color:#172B4D;font-weight:700;">Start Progress</span>
<span class="t" style="left:723.7px;top:807px;font-size:13.4px;line-height:15px;letter-spacing:-0.33px;color:#172B4D;">transition - 23/Aug/2018 13:08:58</span>
<span class="lz lz-todo" style="left:517px;top:827px;width:42px"></span><span class="t" style="left:522.9px;top:830px;font-size:9.9px;line-height:11px;letter-spacing:-0.04px;color:#fff;font-weight:700;text-rendering:geometricPrecision;">TO DO</span>
<span class="t" style="left:563.1px;top:828px;font-size:11px;line-height:12px;letter-spacing:-0.04px;color:#172B4D;">&gt;</span>
<span class="t" style="left:572.1px;top:828px;font-size:11px;line-height:12px;letter-spacing:-0.04px;color:#172B4D;">&gt;</span>
<span class="lz lz-prog" style="left:583px;top:827px;width:74px"></span><span class="t" style="left:588.3px;top:830px;font-size:9.9px;line-height:11px;letter-spacing:-0.44px;color:#594300;font-weight:700;text-rendering:geometricPrecision;">IN PROGRESS</span>
<span class="hr2" style="left:508px;top:850px;width:730px"></span>
<span class="btn" style="left:490px;top:878px;width:93px;height:27px"></span>
<svg style="left:500px;top:884px" width="14" height="12" viewBox="0 0 14 12"><path d="M7 0.9 C10.4 0.9 12.9 2.8 12.9 5.4 C12.9 8 10.4 9.9 7 9.9 C3.6 9.9 1.1 8 1.1 5.4 C1.1 2.8 3.6 0.9 7 0.9 Z M9.4 9.2 L11.4 11" fill="none" stroke="#344563" stroke-width="1.3" stroke-linecap="round"/></svg>
<span class="t" style="left:518.0px;top:885px;font-size:13.4px;line-height:15px;letter-spacing:-0.44px;color:#344563;">Comment</span>

<span class="b" style="left:1658px;top:99px;width:16px;height:822px;background:#F1F1F1"></span>
<span class="b" style="left:1660px;top:433px;width:13px;height:474px;background:#C1C1C1"></span>
<svg style="left:1662px;top:105px" width="9" height="6" viewBox="0 0 9 6"><path d="M0.7 5.2 L4.5 0.8 L8.3 5.2 Z" fill="#505050"/></svg>
<svg style="left:1662px;top:912px" width="9" height="6" viewBox="0 0 9 6"><path d="M0.7 0.8 L4.5 5.2 L8.3 0.8 Z" fill="#A3A3A3"/></svg>

</body>
</html>
